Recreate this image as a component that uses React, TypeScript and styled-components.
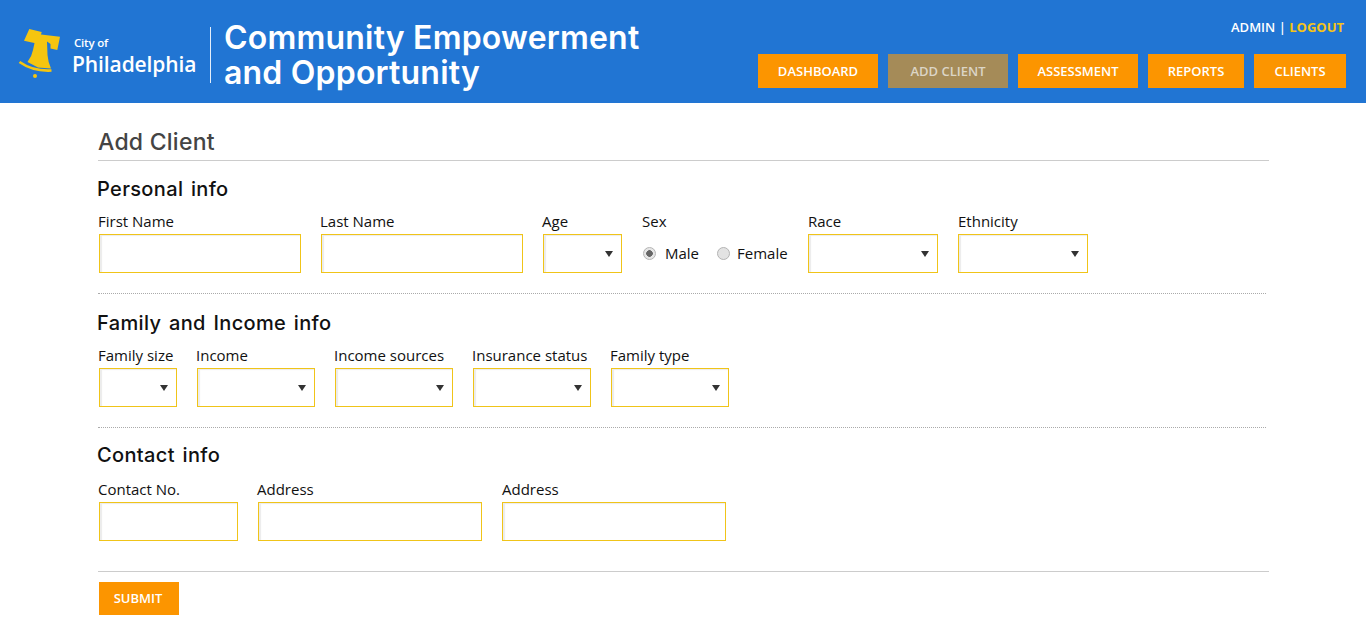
import React from "react";
import styled, { createGlobalStyle } from "styled-components";

const GlobalStyle = createGlobalStyle`
  html, body {
    margin: 0;
    padding: 0;
    background: #fff;
    font-family: "Open Sans", "Liberation Sans", sans-serif;
    color: #111;
  }
  * { box-sizing: border-box; }
`;

const Header = styled.header`
  display: flex;
  justify-content: space-between;
  height: 103px;
  background: #2175d3;
  padding: 0 20px 0 18px;
`;

const Brand = styled.div`
  display: flex;
  align-items: center;
`;

const Bell = styled.svg`
  width: 45px;
  height: 52px;
  margin-top: 2px;
  flex: none;
`;

const CityName = styled.div`
  display: flex;
  flex-direction: column;
  justify-content: center;
  width: 138px;
  height: 56px;
  margin: 7px 0 0 10px;
  border-right: 1px solid #e4eefa;
  color: #fff;
`;

const CityOf = styled.span`
  font-size: 11.5px;
  line-height: 15px;
  font-weight: 600;
  letter-spacing: -0.2px;
  margin-left: 1px;
`;

const CityBig = styled.span`
  font-size: 21px;
  line-height: 26px;
  font-weight: 600;
  letter-spacing: -0.1px;
  margin: 1px 0 -1px -1px;
`;

const Title = styled.h1`
  margin: 6px 0 0 13px;
  font-family: Inter, "Noto Sans", sans-serif;
  font-size: 32px;
  line-height: 35px;
  font-weight: 600;
  letter-spacing: 0.2px;
  color: #fff;
`;

const HeaderRight = styled.div`
  display: flex;
  flex-direction: column;
  align-items: flex-end;
`;

const UserBar = styled.div`
  margin-top: 18px;
  height: 18px;
  padding-right: 2px;
  font-size: 13px;
  line-height: 18px;
  font-weight: 600;
  color: #fff;
`;

const Logout = styled.a`
  color: #f6c416;
  font-weight: 700;
`;

const Nav = styled.nav`
  display: flex;
  gap: 10px;
  margin-top: 18px;
`;

const NavButton = styled.a<{ $w: number; $active?: boolean }>`
  display: flex;
  align-items: center;
  justify-content: center;
  width: ${(p) => p.$w}px;
  height: 34px;
  background: ${(p) => (p.$active ? "#a58b58" : "#fc9500")};
  color: ${(p) => (p.$active ? "#dcd5c6" : "#fff")};
  font-size: 13px;
  font-weight: 600;
`;

const Main = styled.main`
  width: 1171px;
  margin-left: 98px;
`;

const PageTitle = styled.h2`
  margin: 0;
  padding-top: 24px;
  height: 58px;
  border-bottom: 1px solid #ccc;
  font-family: Inter, "Noto Sans", sans-serif;
  font-size: 23px;
  line-height: 30px;
  font-weight: 500;
  letter-spacing: 0.25px;
  color: #444;
`;

const Section = styled.section<{ $h: number; $top: number; $dotted?: boolean }>`
  width: 1168px;
  height: ${(p) => p.$h}px;
  padding-top: ${(p) => p.$top}px;
  border-bottom: ${(p) => (p.$dotted ? "1px dotted #aaa" : "none")};
`;

const SectionTitle = styled.h3`
  margin: 0 0 0 -1px;
  font-family: Inter, "Noto Sans", sans-serif;
  font-size: 20px;
  line-height: 24px;
  font-weight: 500;
  letter-spacing: 0.35px;
  word-spacing: 2px;
  color: #111;
`;

const Row = styled.div<{ $top?: number }>`
  display: flex;
  margin-top: ${(p) => p.$top ?? 11}px;
`;

const Field = styled.div<{ $w: number; $gap?: number }>`
  width: ${(p) => p.$w}px;
  margin-right: ${(p) => p.$gap ?? 19}px;
  flex: none;
`;

const Label = styled.label`
  display: block;
  height: 22px;
  font-size: 15px;
  line-height: 18px;
  white-space: nowrap;
`;

const Control = styled.div<{ $flush?: boolean }>`
  position: relative;
  height: 39px;
  margin-left: ${(p) => (p.$flush ? 0 : 1)}px;
`;

const TextInput = styled.input`
  display: block;
  width: 100%;
  height: 100%;
  border: 1px solid #f0c419;
  border-radius: 0;
  outline: none;
  background: #fff;
  box-shadow: inset 2px 1px 1px #ececec;
`;

const Select = styled.select`
  display: block;
  width: 100%;
  height: 100%;
  border: 1px solid #f0c419;
  border-radius: 0;
  outline: none;
  appearance: none;
  background: #fff;
  box-shadow: inset 2px 1px 1px #ececec;
`;

const Arrow = styled.span`
  position: absolute;
  right: 9px;
  top: 17px;
  width: 0;
  height: 0;
  border-left: 4.5px solid transparent;
  border-right: 4.5px solid transparent;
  border-top: 6px solid #333;
  pointer-events: none;
`;

const RadioRow = styled.div`
  display: flex;
  align-items: center;
  height: 39px;
`;

const RadioLabel = styled.label`
  display: flex;
  align-items: center;
  font-size: 15px;
  line-height: 18px;
  padding-bottom: 1px;
  margin-right: 17px;

  & + & input {
    margin-right: 7px;
  }
`;

const Radio = styled.input`
  appearance: none;
  width: 13px;
  height: 13px;
  margin: 1px 9px 0 1px;
  border: 1px solid #b4b4b4;
  border-radius: 50%;
  background: #e3e3e3;
  &:checked {
    background: radial-gradient(circle, #666 0 3px, #e6e6e6 3.6px);
  }
`;

const Footer = styled.div`
  border-top: 1px solid #ccc;
  margin-top: 10px;
  padding: 10px 0 0 1px;
`;

const Submit = styled.button`
  display: block;
  width: 80px;
  height: 33px;
  padding: 0 2px 2px 0;
  border: none;
  background: #fc9500;
  color: #fff;
  font-family: "Open Sans", sans-serif;
  font-size: 13px;
  font-weight: 600;
`;

function SelectField({ label, w, gap, flush }: { label: string; w: number; gap?: number; flush?: boolean }) {
  return (
    <Field $w={w} $gap={gap}>
      <Label>{label}</Label>
      <Control $flush={flush}>
        <Select />
        <Arrow />
      </Control>
    </Field>
  );
}

function InputField({ label, w, gap, flush }: { label: string; w: number; gap?: number; flush?: boolean }) {
  return (
    <Field $w={w} $gap={gap}>
      <Label>{label}</Label>
      <Control $flush={flush}>
        <TextInput />
      </Control>
    </Field>
  );
}

export default function App() {
  return (
    <>
      <GlobalStyle />
      <Header>
        <Brand>
          <Bell viewBox="18 27 45 52">
            <path
              fill="#f5c50f"
              d="M29.3 29 L41.7 32 L41 34.5 L60 36.7 L57.3 50 L50.5 48.5 L50.5 44 L47 41.5 L47.5 55 Q48 62 51 68.5 L38 67.5 L27.5 62 Q32 56 33 50 L34.5 43 L32 42.5 L24 40.7 Z"
            />
            <path fill="none" stroke="#f5c50f" strokeWidth="2.6" d="M19.5 62 Q33 71.5 51.5 70.5" />
            <circle cx="35" cy="76" r="2" fill="#f5c50f" />
          </Bell>
          <CityName>
            <CityOf>City of</CityOf>
            <CityBig>Philadelphia</CityBig>
          </CityName>
          <Title>
            Community Empowerment
            <br />
            and Opportunity
          </Title>
        </Brand>
        <HeaderRight>
          <UserBar>
            ADMIN | <Logout>LOGOUT</Logout>
          </UserBar>
          <Nav>
            <NavButton $w={120}>DASHBOARD</NavButton>
            <NavButton $w={120} $active>ADD CLIENT</NavButton>
            <NavButton $w={120}>ASSESSMENT</NavButton>
            <NavButton $w={96}>REPORTS</NavButton>
            <NavButton $w={92}>CLIENTS</NavButton>
          </Nav>
        </HeaderRight>
      </Header>
      <Main>
        <PageTitle>Add Client</PageTitle>
        <Section $h={133} $top={16} $dotted>
          <SectionTitle>Personal info</SectionTitle>
          <Row>
            <InputField label="First Name" w={203} />
            <InputField label="Last Name" w={203} />
            <SelectField label="Age" w={80} gap={20} />
            <Field $w={146} $gap={20}>
              <Label>Sex</Label>
              <RadioRow>
                <RadioLabel>
                  <Radio type="radio" name="sex" defaultChecked />
                  Male
                </RadioLabel>
                <RadioLabel>
                  <Radio type="radio" name="sex" />
                  Female
                </RadioLabel>
              </RadioRow>
            </Field>
            <SelectField label="Race" w={130} gap={20} flush />
            <SelectField label="Ethnicity" w={130} flush />
          </Row>
        </Section>
        <Section $h={134} $top={17} $dotted>
          <SectionTitle>Family and Income info</SectionTitle>
          <Row>
            <SelectField label="Family size" w={79} />
            <SelectField label="Income" w={119} />
            <SelectField label="Income sources" w={119} />
            <SelectField label="Insurance status" w={119} />
            <SelectField label="Family type" w={119} />
          </Row>
        </Section>
        <Section $h={133} $top={15}>
          <SectionTitle>Contact info</SectionTitle>
          <Row $top={13}>
            <InputField label="Contact No." w={140} />
            <InputField label="Address" w={225} gap={20} />
            <InputField label="Address" w={224} flush />
          </Row>
        </Section>
        <Footer>
          <Submit>SUBMIT</Submit>
        </Footer>
      </Main>
    </>
  );
}
